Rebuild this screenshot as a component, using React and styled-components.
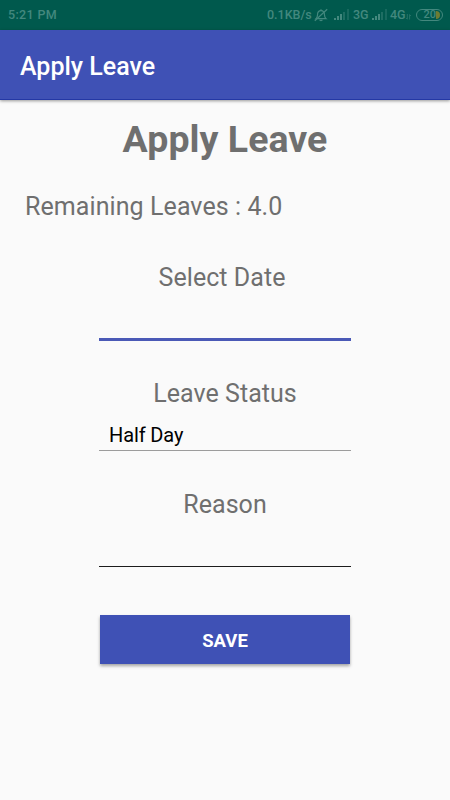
import {useState} from 'react'
import styled, {createGlobalStyle} from 'styled-components'

const App = () => {

    const [date, setDate] = useState('')
    const [reason, setReason] = useState('')

    return (
        <Screen>
            <GlobalStyle />

            <StatusBar>
                <Clock>5:21 PM</Clock>

                <StatusIcons>
                    <NetText>0.1KB/s</NetText>
                    <MutedBell />
                    <Signal $left = "6px" />
                    <NetLabel $left = "3px" $width = "17px">3G</NetLabel>
                    <Signal $left = "2px" />
                    <NetLabel $left = "2px" $width = "16px">4G</NetLabel>
                    <DataArrows />
                    <Battery>20<Charge /></Battery>
                </StatusIcons>
            </StatusBar>

            <Toolbar>Apply Leave</Toolbar>

            <Title>Apply Leave</Title>
            <Remaining>Remaining Leaves : 4.0</Remaining>

            <Form>
                <Field $top = "41px">
                    <Label $shift = "6px">Select Date</Label>
                    <Input $height = "48px" $line = "3px solid #4a59b6" value = {date}
                        onChange = {(e) => setDate(e.target.value)}
                    />
                </Field>

                <Field $top = "38px">
                    <Label>Leave Status</Label>
                    <Select>Half Day</Select>
                </Field>

                <Field $top = "39px">
                    <Label>Reason</Label>
                    <Input $height = "47px" $line = "1px solid #1c1c1c" value = {reason}
                        onChange = {(e) => setReason(e.target.value)}
                    />
                </Field>

                <SaveButton type = "button">SAVE</SaveButton>
            </Form>
        </Screen>
    )
}

export default App

const MutedBell = () => (
    <BellSvg viewBox = "0 0 14 14">
        <path d = "M2 10.600h10c-1.100-.9-1.500-1.900-1.500-3.600 0-2.800-1.100-4.300-3.500-4.300S3.500 4.200 3.500 7c0 1.700-.4 2.700-1.500 3.600z" />
        <path d = "M7 2.700V1.200M5.600 11.800c.5 1 2.300 1 2.800 0M.8 12.800L13.200 1.200" />
    </BellSvg>
)

const Signal = ({$left}) => (
    <SignalSvg $left = {$left} viewBox = "0 0 16 12">
        <rect x = "0" y = "9" width = "2" height = "2" />
        <rect x = "3" y = "7" width = "2" height = "4" />
        <rect x = "6" y = "5" width = "2" height = "6" />
        <rect x = "9" y = "3" width = "2" height = "8" opacity = ".45" />
        <rect x = "13" y = "0" width = "2" height = "11" opacity = ".35" />
    </SignalSvg>
)

const DataArrows = () => (
    <ArrowsSvg viewBox = "0 0 5 6">
        <path d = "M1.300 0v5M0 3.800L1.300 5.300M3.600 5.500V.6M3.600.6L4.900 2" />
    </ArrowsSvg>
)

const GlobalStyle = createGlobalStyle`
    * {
        box-sizing: border-box;
    }

    body {
        margin: 0;
        background-color: #fafafa;
        font-family: Roboto, sans-serif;
    }
`;

const Screen = styled.div`
    display: flex;
    flex-direction: column;
    width: 450px;
    height: 800px;
    overflow: hidden;
    background-color: #fafafa;
    color: #6f6f6f;
`;

const StatusBar = styled.div`
    display: flex;
    justify-content: space-between;
    align-items: center;
    flex: none;
    height: 30px;
    padding: 0 7px 0 8px;
    background-color: #00594d;
    color: #43887e;
    font-size: 12.5px;
    font-weight: 500;
    line-height: 16px;
    white-space: nowrap;
`;

const Clock = styled.span`
    letter-spacing: 0.35px;
`;

const StatusIcons = styled.div`
    display: flex;
    align-items: center;
`;

const NetText = styled.span`
    width: 47px;
    letter-spacing: 0;
`;

const NetLabel = styled.span`
    width: ${({$width}) => $width};
    margin-left: ${({$left}) => $left};
`;

const BellSvg = styled.svg`
    width: 14px;
    height: 14px;
    fill: none;
    stroke: #43887e;
    stroke-width: 1.2;
`;

const SignalSvg = styled.svg`
    width: 16px;
    height: 12px;
    margin-left: ${({$left}) => $left};
    fill: #43887e;
`;

const ArrowsSvg = styled.svg`
    width: 5px;
    height: 6px;
    margin: 4px 5px 0 0;
    fill: none;
    stroke: #43887e;
    stroke-width: 0.8;
    opacity: 0.7;
`;

const Battery = styled.span`
    display: flex;
    justify-content: flex-end;
    align-items: center;
    width: 27px;
    height: 12px;
    padding-right: 2px;
    border: 1px solid #43887e;
    border-radius: 6px;
    font-size: 11px;
    line-height: 10px;
`;

const Charge = styled.i`
    width: 4px;
    height: 8px;
    border-radius: 0 4px 4px 0;
    background-color: #6d7c33;
`;

const Toolbar = styled.header`
    display: flex;
    align-items: center;
    flex: none;
    height: 70px;
    padding: 4px 20px 0;
    background-color: #3f51b5;
    border-bottom: 1px solid #2438a5;
    box-shadow: 0 1px 3px rgba(0, 0, 0, 0.4);
    color: white;
    font-size: 25px;
    font-weight: 500;
    line-height: 30px;
`;

const Title = styled.h1`
    margin: 17px 0 0;
    font-size: 37.5px;
    font-weight: 700;
    letter-spacing: 0.05px;
    line-height: 44px;
    text-align: center;
`;

const Remaining = styled.p`
    margin: 31px 0 0 25px;
    font-size: 25px;
    letter-spacing: 0.08px;
    line-height: 30px;
`;

const Form = styled.form`
    display: flex;
    flex-direction: column;
    align-items: center;
`;

const Field = styled.div`
    display: flex;
    flex-direction: column;
    width: 252px;
    margin-top: ${({$top}) => $top};
`;

const Label = styled.label`
    padding-right: ${({$shift}) => $shift || 0};
    font-size: 25px;
    letter-spacing: 0.05px;
    line-height: 30px;
    text-align: center;
`;

const Input = styled.input`
    width: 100%;
    height: ${({$height}) => $height};
    padding: 0 5px;
    border: none;
    border-bottom: ${({$line}) => $line};
    outline: 0;
    background: transparent;
    font: 22px Roboto, sans-serif;
`;

const Select = styled.div`
    height: 42px;
    padding: 14px 10px 0;
    border-bottom: 1px solid #9c9c9c;
    color: black;
    font-size: 20px;
    letter-spacing: -0.12px;
    line-height: 24px;
`;

const SaveButton = styled.button`
    width: 250px;
    height: 49px;
    margin-top: 48px;
    padding: 2px 0 0;
    border: none;
    background-color: #3f51b5;
    box-shadow: 0 2px 3px rgba(0, 0, 0, 0.35);
    color: white;
    font: 700 18.5px Roboto, sans-serif;
`;
